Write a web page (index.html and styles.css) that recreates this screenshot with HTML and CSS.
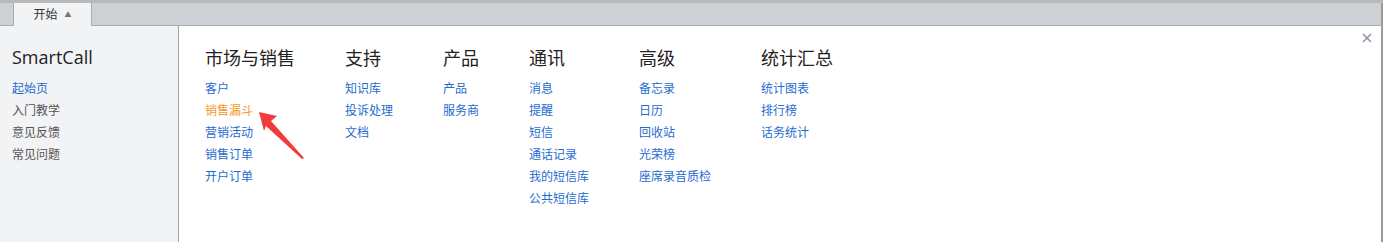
FILE: index.html
```html
<!DOCTYPE html>
<html lang="zh-CN">
<head>
    <meta charset="UTF-8">
    <meta name="viewport" content="width=device-width, initial-scale=1.0">
    <title>SmartCall</title>
    <link rel="stylesheet" href="styles.css">
</head>
<body>
    <div class="topline"></div>
    <div class="tabbar">
        <div class="tab">开始<span class="caret">&#9650;</span></div>
    </div>

    <div class="ribbon">
        <div class="side">
            <div class="title">SmartCall</div>
            <a class="cur">起始页</a>
            <a>入门教学</a>
            <a>意见反馈</a>
            <a>常见问题</a>
        </div>

        <div class="menu">
            <div class="col wide">
                <div class="head">市场与销售</div>
                <a>客户</a>
                <a class="hover">销售漏斗</a>
                <a>营销活动</a>
                <a>销售订单</a>
                <a>开户订单</a>
            </div>
            <div class="col">
                <div class="head">支持</div>
                <a>知识库</a>
                <a>投诉处理</a>
                <a>文档</a>
            </div>
            <div class="col">
                <div class="head">产品</div>
                <a>产品</a>
                <a>服务商</a>
            </div>
            <div class="col">
                <div class="head">通讯</div>
                <a>消息</a>
                <a>提醒</a>
                <a>短信</a>
                <a>通话记录</a>
                <a>我的短信库</a>
                <a>公共短信库</a>
            </div>
            <div class="col">
                <div class="head">高级</div>
                <a>备忘录</a>
                <a>日历</a>
                <a>回收站</a>
                <a>光荣榜</a>
                <a>座席录音质检</a>
            </div>
            <div class="col">
                <div class="head">统计汇总</div>
                <a>统计图表</a>
                <a>排行榜</a>
                <a>话务统计</a>
            </div>

            <svg class="close" width="10" height="10" viewBox="0 0 10 10">
                <path d="M1 1L9 9M9 1L1 9" stroke="#8c97a3" stroke-width="1.6"/>
            </svg>
        </div>
    </div>

    <!-- annotation -->
    <svg class="arrow" width="60" height="60" viewBox="0 0 60 60">
        <polygon points="2,1 20,5 14,10 47,47 45,48 9,15 7,20" fill="#f23b3b"/>
    </svg>
</body>
</html>
```

FILE: styles.css
```css
body{
    margin:0;
    font-family:"Noto Sans CJK SC", "Noto Sans", sans-serif;
    font-size:12px;
    background:#fff;
}

.topline{
    height:3px;
    background:#b9b9b9;
}

.tabbar{
    height:23px;
    background:#cdd0d5;
    border-bottom:1px solid #a9abae;
    padding-left:13px;
    box-sizing:border-box;
    border-right:2px solid #9b9b9b;
}

.tab{
    width:79px;
    height:23px;
    box-sizing:border-box;
    background:#f2f3f5;
    border-left:1px solid #a9abae;
    border-right:1px solid #a9abae;
    text-align:center;
    line-height:22px;
    color:#333;
}

.caret{
    font-size:7px;
    color:#777;
    vertical-align:2px;
    margin-left:7px;
}

.ribbon{
    display:flex;
    height:216px;
    border-right:2px solid #9b9b9b;
}

.side{
    width:179px;
    background:#f2f3f5;
    border-right:1px solid #a0a0a0;
    padding:19px 0 0 12px;
    box-sizing:border-box;
}

.title{
    font-family:"Open Sans", "Noto Sans", sans-serif;
    font-size:18px;
    line-height:24px;
    color:#222;
    margin-bottom:8px;
}

a{
    display:block;
    line-height:22px;
    color:#555;
    cursor:pointer;
    white-space:nowrap;
}

.side .cur{
    color:#1f6bd0;
}

.menu{
    flex:1;
    display:flex;
    gap:50px;
    padding:19px 0 0 26px;
    position:relative;
}

.wide{
    min-width:90px;
}

.head{
    font-size:18px;
    line-height:24px;
    color:#222;
    margin-bottom:8px;
    white-space:nowrap;
}

.menu a{
    color:#1f6bd0;
}

.menu a.hover{
    color:#f39a2a;
}

.close{
    position:absolute;
    right:9px;
    top:7px;
}

.arrow{
    position:absolute;
    left:257px;
    top:111px;
}
```
